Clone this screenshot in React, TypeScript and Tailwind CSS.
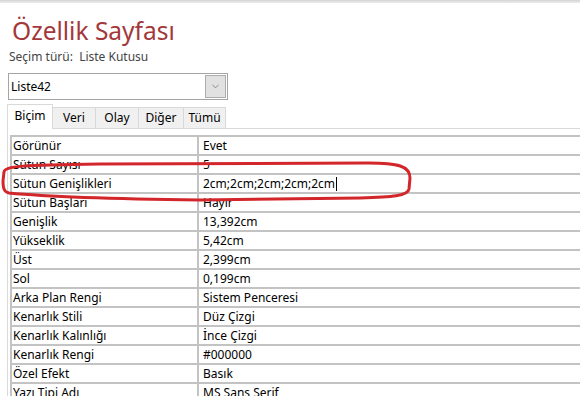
import { ChevronDown } from "lucide-react";

const rows: [string, string][] = [
  ["Görünür", "Evet"],
  ["Sütun Sayısı", "5"],
  ["Sütun Genişlikleri", "2cm;2cm;2cm;2cm;2cm"],
  ["Sütun Başları", "Hayır"],
  ["Genişlik", "13,392cm"],
  ["Yükseklik", "5,42cm"],
  ["Üst", "2,399cm"],
  ["Sol", "0,199cm"],
  ["Arka Plan Rengi", "Sistem Penceresi"],
  ["Kenarlık Stili", "Düz Çizgi"],
  ["Kenarlık Kalınlığı", "İnce Çizgi"],
  ["Kenarlık Rengi", "#000000"],
  ["Özel Efekt", "Basık"],
  ["Yazı Tipi Adı", "MS Sans Serif"],
];

const tabs = ["Biçim", "Veri", "Olay", "Diğer", "Tümü"];
const tabWidths = ["w-[46px]", "w-[43px]", "w-[43px]", "w-[45px]", "w-[42px]"];

export default function App() {
  return (
    <div className="relative w-[580px] h-[396px] overflow-hidden bg-white font-['Noto_Sans',sans-serif] text-[12px] text-black">
      {/* window top edge */}
      <div className="h-[3px] bg-gradient-to-b from-[#d4d4d4] to-[#ececec]" />

      {/* Heading */}
      <div className="pl-[12px] pt-[14px] h-[46px] text-[24.5px] leading-[28px] text-[#a4373a]">
        Özellik Sayfası
      </div>
      <div className="pl-[9px] h-[24px] leading-[16px] text-[#444]">
        Seçim türü:&nbsp; Liste Kutusu
      </div>

      {/* Selector */}
      <div className="ml-[8px] w-[220px] h-[27px] border border-[#a5a5a5] flex items-center pl-[2px] pr-[1px]">
        <span className="flex-1 leading-[16px]">Liste42</span>
        <div className="w-[21px] h-[23px] bg-[#e1e1e1] border border-[#adadad] flex items-center justify-center">
          <ChevronDown size={11} strokeWidth={1.3} color="#555" />
        </div>
      </div>

      {/* Tabs */}
      <div className="mt-[5px] ml-[7px] flex items-end h-[24px]">
        {tabs.map((t, i) =>
          i === 0 ? (
            <div
              key={t}
              className={`${tabWidths[i]} h-[25px] bg-white border border-b-0 border-[#d9d9d9] flex items-center justify-center pb-[2px] relative z-10`}
            >
              {t}
            </div>
          ) : (
            <div
              key={t}
              className={`${tabWidths[i]} h-[22px] bg-[#f0f0f0] border border-l-0 border-[#d9d9d9] flex items-center justify-center`}
            >
              {t}
            </div>
          )
        )}
      </div>

      {/* Panel */}
      <div className="ml-[7px] -mt-px border-l border-t border-[#d9d9d9] pl-[2px] pt-[6px]">
        <div className="border-t-2 border-l-2 border-[#c3c3c3]">
          {rows.map(([k, v]) => (
            <div key={k} className="flex h-[19px] border-b-2 border-[#c3c3c3]">
              <div className="w-[187px] pl-[1px] border-r-2 border-[#c3c3c3] leading-[17px] whitespace-nowrap">
                {k}
              </div>
              <div className="pl-[4px] leading-[17px] whitespace-nowrap flex items-center">
                {v}
                {k === "Sütun Genişlikleri" && (
                  <span className="ml-[1px] w-px h-[14px] bg-black" />
                )}
              </div>
            </div>
          ))}
        </div>
      </div>

      {/* hand-drawn highlight */}
      <svg
        className="absolute inset-0 pointer-events-none"
        width="580"
        height="396"
        viewBox="0 0 580 396"
      >
        <path
          d="M100 164 L368 163 C398 163 410 166 410 178 L409 189 C408 196 392 197 360 198 L200 200 C120 199 40 196 9 193 C4 192 3 188 3 181 L4 172 C5 166 22 165 100 164 Z"
          fill="none"
          stroke="#d3262b"
          strokeWidth="3"
          strokeLinejoin="round"
        />
      </svg>
    </div>
  );
}
